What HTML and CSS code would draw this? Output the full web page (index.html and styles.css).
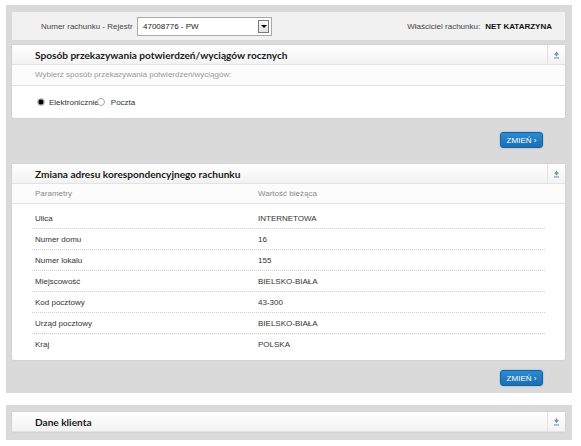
FILE: index.html
```html
<!DOCTYPE html>
<html lang="pl">
<head>
  <meta charset="UTF-8">
  <title>Dane rachunku</title>
  <link rel="stylesheet" href="styles.css">
</head>
<body>
  <div class="panel">
    <div class="rachunek">
      <span class="etykieta rejestr">Numer rachunku - Rejestr</span>
      <div class="select">
        <span>47008776 - PW</span>
        <span class="select-btn"></span>
      </div>
      <div class="wlasciciel">
        <span class="etykieta">Właściciel rachunku:</span>
        <b>NET KATARZYNA</b>
      </div>
    </div>

    <div class="karta">
      <div class="naglowek">
        <div class="tytul">Sposób przekazywania potwierdzeń/wyciągów rocznych</div>
        <div class="zwin">
          <svg width="7" height="8" viewBox="0 0 7 8"><path d="M3.5 0.5 L6 3.8 H4.4 V5.3 H2.6 V3.8 H1 Z" fill="#7b94ad"/><rect x="1" y="6.4" width="5" height="1.1" fill="#7b94ad"/></svg>
        </div>
      </div>
      <div class="podtytul">Wybierz sposób przekazywania potwierdzeń/wyciągów:</div>
      <div class="opcje">
        <span class="radio zaznaczony"></span>
        <span class="opcja">Elektronicznie</span>
        <span class="radio nakladka"></span>
        <span class="opcja">Poczta</span>
      </div>
    </div>

    <div class="akcje">
      <button class="zmien">ZMIEŃ ›</button>
    </div>

    <div class="karta">
      <div class="naglowek">
        <div class="tytul">Zmiana adresu korespondencyjnego rachunku</div>
        <div class="zwin">
          <svg width="7" height="8" viewBox="0 0 7 8"><path d="M3.5 0.5 L6 3.8 H4.4 V5.3 H2.6 V3.8 H1 Z" fill="#7b94ad"/><rect x="1" y="6.4" width="5" height="1.1" fill="#7b94ad"/></svg>
        </div>
      </div>
      <div class="kolumny">
        <span class="kol1">Parametry</span>
        <span>Wartość bieżąca</span>
      </div>
      <div class="tabela">
        <div class="wiersz"><span class="kol1">Ulica</span><span>INTERNETOWA</span></div>
        <div class="wiersz"><span class="kol1">Numer domu</span><span>16</span></div>
        <div class="wiersz"><span class="kol1">Numer lokalu</span><span>155</span></div>
        <div class="wiersz"><span class="kol1">Miejscowość</span><span>BIELSKO-BIAŁA</span></div>
        <div class="wiersz"><span class="kol1">Kod pocztowy</span><span>43-300</span></div>
        <div class="wiersz"><span class="kol1">Urząd pocztowy</span><span>BIELSKO-BIAŁA</span></div>
        <div class="wiersz"><span class="kol1">Kraj</span><span>POLSKA</span></div>
      </div>
    </div>

    <div class="akcje ostatnie">
      <button class="zmien">ZMIEŃ ›</button>
    </div>
  </div>

  <div class="panel dolny">
    <div class="karta">
      <div class="naglowek">
        <div class="tytul">Dane klienta</div>
        <div class="zwin">
          <svg width="7" height="8" viewBox="0 0 7 8"><path d="M3.5 5.3 L6 2 H4.4 V0.5 H2.6 V2 H1 Z" fill="#7b94ad"/><rect x="1" y="6.4" width="5" height="1.1" fill="#7b94ad"/></svg>
        </div>
      </div>
    </div>
  </div>
</body>
</html>
```

FILE: styles.css
```css
body {
  margin: 0;
  background: #fff;
  font-family: 'Liberation Sans', Arial, sans-serif;
  font-size: 8px;
  color: #333;
}

.panel {
  margin: 5px 9px 0 6px;
  background: #dadada;
  padding: 7px 7px 7px 6px;
}

.panel.dolny {
  margin-top: 12px;
  padding-bottom: 8px;
}

.rachunek {
  display: flex;
  align-items: center;
  height: 28px;
  background: #f1f1f1;
  padding: 0 13px 0 29px;
}

.etykieta {
  color: #444;
}

.etykieta.rejestr {
  width: 96px;
  white-space: nowrap;
}

.select {
  display: flex;
  align-items: center;
  justify-content: space-between;
  width: 135px;
  height: 19px;
  padding: 0 2px 0 5px;
  background: #fff;
  border: 1px solid #a8a8a8;
  box-sizing: border-box;
  color: #222;
}

.select-btn {
  position: relative;
  width: 11px;
  height: 13px;
  border: 1px solid #7a7a7a;
  background: linear-gradient(#fbfbfb, #e2e2e2);
  box-sizing: border-box;
}

.select-btn::after {
  content: '';
  position: absolute;
  left: 2px;
  top: 4px;
  border-left: 3px solid transparent;
  border-right: 3px solid transparent;
  border-top: 3px solid #000;
}

.wlasciciel {
  margin-left: auto;
  display: flex;
  gap: 5px;
}

.wlasciciel b {
  color: #111;
}

.karta {
  background: #fff;
  border-radius: 2px;
  box-shadow: 0 0 2px rgba(0, 0, 0, 0.12);
}

.rachunek + .karta {
  margin-top: 5px;
}

.naglowek {
  display: flex;
  height: 20px;
  background: linear-gradient(#ffffff, #f2f2f2);
  border-bottom: 1px solid #e3e3e3;
  box-sizing: border-box;
}

.tytul {
  flex: 1;
  padding-left: 23px;
  display: flex;
  align-items: center;
  font-family: Lato, 'Open Sans', sans-serif;
  font-weight: 700;
  font-size: 10.1px;
  color: #1a1a1a;
}

.zwin {
  width: 17px;
  border-left: 1px solid #e3e3e3;
  display: flex;
  align-items: center;
  justify-content: center;
}

.podtytul {
  height: 20px;
  line-height: 20px;
  padding-left: 23px;
  color: #999;
  background: #fcfcfc;
  border-bottom: 1px solid #e3e3e3;
}

.opcje {
  display: flex;
  align-items: center;
  height: 32px;
  padding-left: 25px;
}

.radio {
  width: 6px;
  height: 6px;
  border: 1px solid #aaa;
  border-radius: 50%;
  background: #fff;
  margin-right: 4px;
}

.radio.zaznaczony {
  background: radial-gradient(circle, #000 0 2.2px, #777 2.6px);
  border-color: #bbb;
}

.radio.nakladka {
  margin-left: -2px;
  margin-right: 6px;
}

.akcje {
  display: flex;
  justify-content: flex-end;
  padding: 14px 22px 16px 0;
}

.akcje.ostatnie {
  padding: 10px 22px 0 0;
}

.zmien {
  width: 43px;
  height: 16px;
  padding: 0;
  border: 1px solid #15619c;
  border-radius: 3px;
  background: linear-gradient(#2c8ad0, #1a6fb2);
  box-shadow: 0 0 2px rgba(60, 150, 230, 0.6);
  color: #fff;
  font-family: 'Liberation Sans', Arial, sans-serif;
  font-size: 8px;
}

.kolumny {
  display: flex;
  height: 19px;
  align-items: center;
  padding-left: 23px;
  color: #888;
  background: #fcfcfc;
  border-bottom: 1px solid #e3e3e3;
}

.kol1 {
  width: 223px;
}

.tabela {
  padding: 4px 20px 5px 20px;
}

.wiersz {
  display: flex;
  align-items: center;
  height: 21px;
  padding-left: 3px;
  border-bottom: 1px dotted #cfcfcf;
  box-sizing: border-box;
  color: #333;
}

.wiersz:last-child {
  border-bottom: 0;
}
```
